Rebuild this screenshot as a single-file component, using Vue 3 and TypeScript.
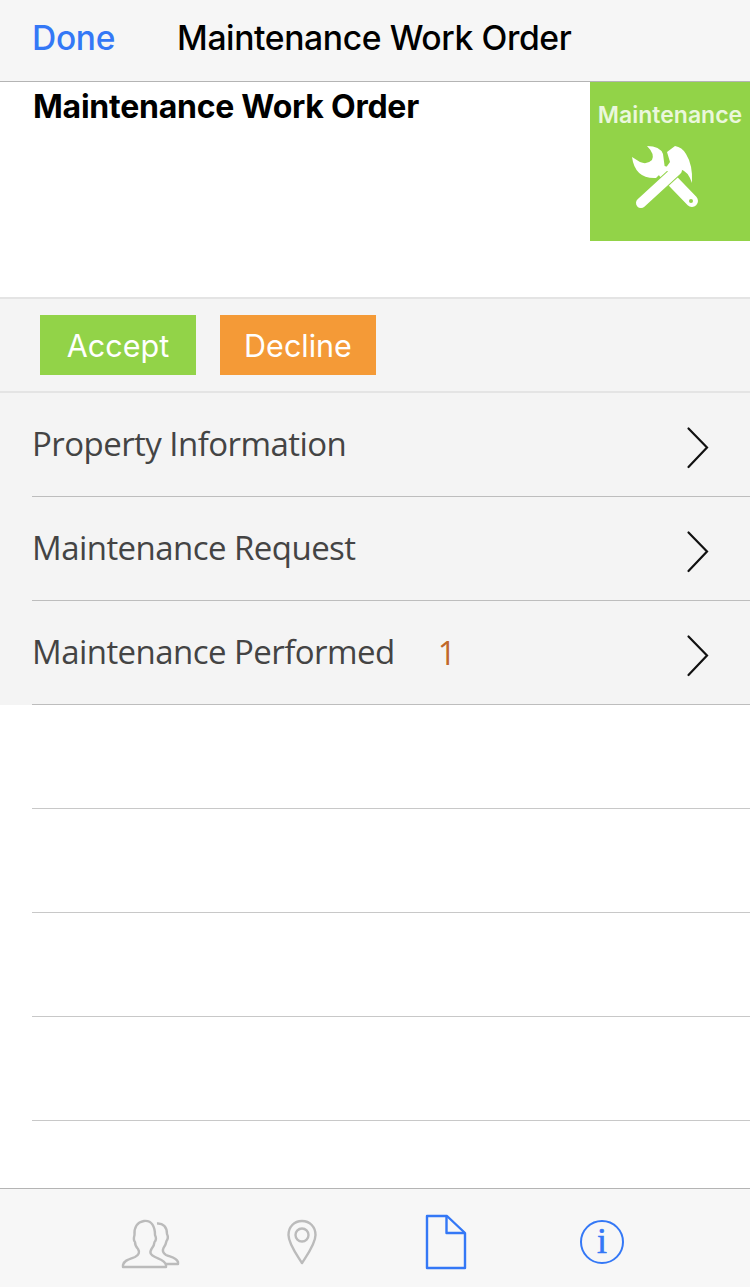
<script setup lang="ts">
const items = [
  { label: 'Property Information', badge: '' },
  { label: 'Maintenance Request', badge: '' },
  { label: 'Maintenance Performed', badge: '1' },
]
const blanks = [1, 2, 3, 4]
</script>

<template>
  <div class="screen">
    <header class="nav">
      <span class="done">Done</span>
      <span class="nav-title">Maintenance Work Order</span>
    </header>

    <section class="head">
      <h1 class="head-title">Maintenance Work Order</h1>
      <div class="tile">
        <span class="tile-text">Maintenance</span>
        <svg class="tile-icon" width="68" height="66" viewBox="0 0 68 66">
          <path d="M32 27 L60 56" stroke="#fff" stroke-width="12" stroke-linecap="round" fill="none" />
          <path d="M15 1 Q28 1 31 9 L33 24 L24 33 Q3 34 0 12 L8 17 Q15 20 20 15 Q23 9 15 1 Z" fill="#fff" />
          <path d="M45 25 L9 58" stroke="#92d348" stroke-width="12" fill="none" />
          <path d="M45 25 L9 58" stroke="#fff" stroke-width="10" stroke-linecap="round" fill="none" />
          <path d="M35 7 L43 1 Q50 2 54 9 Q61 20 60 38 Q56 26 48 24 L43 33 L33 24 L38 17 Z" fill="#fff" />
          <circle cx="59" cy="56" r="2" fill="#92d348" />
        </svg>
      </div>
    </section>

    <div class="actions">
      <button class="btn accept" type="button">Accept</button>
      <button class="btn decline" type="button">Decline</button>
    </div>

    <ul class="list">
      <li v-for="item in items" :key="item.label" class="row">
        <span class="row-label">{{ item.label }}</span>
        <span v-if="item.badge" class="row-badge">{{ item.badge }}</span>
        <svg class="chevron" width="24" height="44" viewBox="0 0 24 44">
          <path d="M2.500 2.500 L21 21.500 L2.500 41" fill="none" stroke="#111" stroke-width="2.200" stroke-linecap="round" />
        </svg>
      </li>
    </ul>

    <div class="blank-list">
      <div v-for="b in blanks" :key="b" class="blank-row"></div>
    </div>

    <footer class="tabs">
      <svg class="tab people" width="60" height="52" viewBox="0 0 60 52" fill="none" stroke="#bbb" stroke-width="2.400" stroke-linejoin="round">
        <path d="M2 49 L2 47 C3 42 9 41 14 39 C18 37 19 34 17 31 C15 29 14 27 14 24 C12 22 13 19 13.500 17 C13 10 16 4 23 3 C31 2 34 9 34 17 C35 19 35.500 22 33.500 24 C33.500 27 32 29 30.500 31 C28 35 30 37 34 39 C38 41 44 42 45 47 L45 49 Z" />
        <path d="M36 5.500 C42 5 46 9 46 16 C47 18 47 21 45.500 23 C45 26 44 28 42.500 30 C41 33 42 35 45 37 C49 39 55 39 57 44 L57 46 L45 46" />
      </svg>
      <svg class="tab pin" width="32" height="46" viewBox="0 0 32 46" fill="none" stroke="#bbb" stroke-width="2.400">
        <path d="M16 44 C11 36 2.500 25 2.500 16 C2.500 8 8 2 16 2 C24 2 29.500 8 29.500 16 C29.500 25 21 36 16 44 Z" stroke-linejoin="round" />
        <circle cx="16" cy="16" r="6.500" />
      </svg>
      <svg class="tab doc" width="42" height="56" viewBox="0 0 42 56" fill="none" stroke="#3478f6" stroke-width="2.400" stroke-linejoin="round">
        <path d="M2 2 L22 2 L40 19 L40 54 L2 54 Z" />
        <path d="M21.500 2 L21.500 19 L40 19" />
      </svg>
      <div class="tab info">i</div>
    </footer>
  </div>
</template>

<style scoped>
.screen {
  width: 750px;
  height: 1287px;
  display: flex;
  flex-direction: column;
  background: #fff;
  overflow: hidden;
}
.nav {
  height: 75px;
  padding: 0 0 6px 32px;
  flex: none;
  display: flex;
  align-items: center;
  background: #f6f6f6;
  border-bottom: 1px solid #b4b4b4;
}
.done {
  font: 500 33.500px "Inter", sans-serif;
  color: #3478f6;
  letter-spacing: -0.300px;
}
.nav-title {
  margin-left: 62px;
  font: 500 33.700px "Inter", sans-serif;
  color: #000;
  letter-spacing: -0.400px;
}
.head {
  height: 215px;
  flex: none;
  display: flex;
  justify-content: space-between;
  padding-left: 33px;
}
.head-title {
  margin: 7px 0 0;
  font: 700 32px/36px "Inter", sans-serif;
  color: #000;
  letter-spacing: -0.250px;
}
.tile {
  width: 160px;
  height: 159px;
  background: #92d348;
  display: flex;
  flex-direction: column;
  align-items: center;
}
.tile-text {
  margin-top: 21px;
  font: 600 23px/24px "Inter", sans-serif;
  color: #eaf7dc;
}
.tile-icon {
  margin: 18px 8px 0 0;
}
.actions {
  height: 92px;
  flex: none;
  display: flex;
  align-items: center;
  gap: 24px;
  padding-left: 40px;
  background: #f4f4f4;
  border-top: 2px solid #e4e4e4;
  border-bottom: 2px solid #e4e4e4;
}
.btn {
  width: 156px;
  height: 60px;
  border: 0;
  padding: 0;
  color: #fff;
  font: 400 30.500px "Inter", sans-serif;
}
.accept {
  background: #92d348;
}
.decline {
  background: #f49a37;
}
.list {
  list-style: none;
  margin: 0;
  padding: 0;
  background: #f4f4f4;
  flex: none;
}
.row {
  height: 103px;
  margin-left: 32px;
  padding-right: 40px;
  display: flex;
  align-items: center;
  border-bottom: 1px solid #bdbdbd;
}
.row-label {
  font: 400 33px "Open Sans", sans-serif;
  color: #444;
  letter-spacing: -0.550px;
  margin-bottom: 2px;
}
.row-badge {
  margin-left: 43px;
  font: 400 32px "Open Sans", sans-serif;
  color: #c0682a;
}
.chevron {
  margin-left: auto;
  margin-top: 6px;
}
.blank-list {
  flex: 1;
}
.blank-row {
  height: 103px;
  margin-left: 32px;
  border-bottom: 1px solid #c8c8c8;
}
.tabs {
  height: 98px;
  flex: none;
  display: flex;
  align-items: flex-start;
  border-top: 1px solid #b4b4b4;
  background: #f7f7f7;
}
.tab {
  flex: none;
}
.people {
  margin: 29px 0 0 121px;
}
.pin {
  margin: 30px 0 0 105px;
}
.doc {
  margin: 25px 0 0 107px;
}
.info {
  margin: 31px 0 0 113px;
  width: 44px;
  height: 44px;
  box-sizing: border-box;
  border: 2px solid #3478f6;
  border-radius: 50%;
  color: #3478f6;
  text-align: center;
  font: 400 36px/38px "Liberation Serif", serif;
  -webkit-text-stroke: 0.6px #3478f6;
}
</style>
